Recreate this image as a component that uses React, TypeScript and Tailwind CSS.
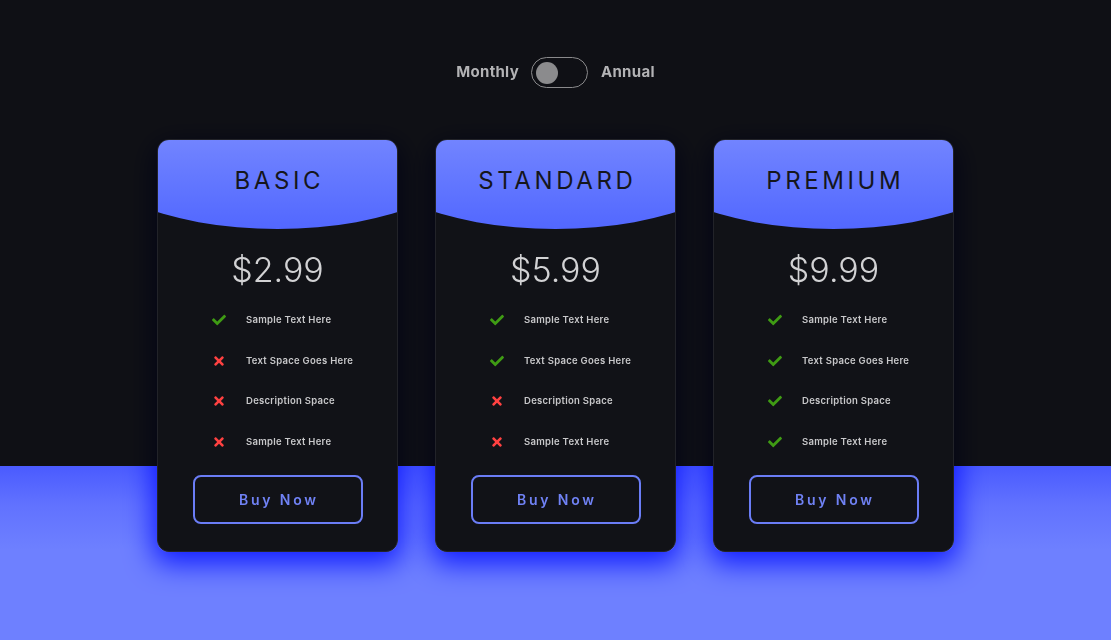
import { FaCheck, FaTimes } from "react-icons/fa";

const plans = [
    { name: "BASIC", price: "$2.99", checks: [true, false, false, false] },
    { name: "STANDARD", price: "$5.99", checks: [true, true, false, false] },
    { name: "PREMIUM", price: "$9.99", checks: [true, true, true, true] },
];

const features = ["Sample Text Here", "Text Space Goes Here", "Description Space", "Sample Text Here"];

function PlanCard({ name, price, checks }: { name: string; price: string; checks: boolean[] }) {
    return (
        <div className="relative w-[241px] h-[413px]">
            {/* shadow layer, multiplied so it darkens the black and saturates the blue */}
            <div className="absolute inset-0 rounded-[12px] mix-blend-multiply shadow-[0_8px_28px_4px_rgb(40,60,255)]" />
            <div className="relative h-full rounded-[12px] overflow-hidden bg-[#111217] border border-[#222329] flex flex-col">
                <div className="h-[90px] -mx-px -mt-px flex justify-center pt-[28px] bg-gradient-to-b from-[#7284ff] to-[#5267ff] [clip-path:ellipse(206px_90px_at_50%_0)]">
                    <h2 className="text-[24px] leading-[28px] tracking-[0.15em] font-normal text-[#15161c] pl-[0.15em]">{name}</h2>
                </div>
                <p className="mt-[21px] text-center text-[34px] leading-[40px] font-light text-[#d2d2d4]">{price}</p>
                <ul className="mt-[10px] pl-[53px] flex flex-col">
                    {features.map((f, i) => (
                        <li key={i} className="h-[40.5px] flex items-center">
                            <span className="w-[35px] flex">
                                {checks[i] ? (
                                    <FaCheck className="w-[16px] h-[14px] text-[#3f9b14]" />
                                ) : (
                                    <FaTimes className="w-[12px] h-[14px] ml-[2px] text-[#ff4141]" />
                                )}
                            </span>
                            <span className="text-[9.5px] font-semibold tracking-[0.03em] text-[#c8c8ca]">{f}</span>
                        </li>
                    ))}
                </ul>
                <button className="mt-[13px] mx-auto w-[170px] h-[49px] rounded-[8px] border-2 border-[#6b7df6] text-[#7082f5] text-[14px] font-semibold tracking-[0.2em] pl-[0.2em]">
                    Buy Now
                </button>
            </div>
        </div>
    );
}

export default function App() {
    return (
        <div
            className="h-[640px] w-full overflow-hidden flex flex-col items-center bg-[linear-gradient(to_bottom,#0f1015_0,#0f1015_466px,#4a5bff_466px,#6172ff_505px,#6e80ff_550px,#6e80ff_100%)]"
            style={{ fontFamily: "Inter, 'Noto Sans', sans-serif" }}
        >
            <div className="mt-[57px] flex items-center gap-[12px]">
                <span className="text-[15px] font-bold text-[#b3b3b5] tracking-[0.02em]">Monthly</span>
                <div className="w-[57px] h-[31px] rounded-full border border-[#8a8a8c] flex items-center px-[4px]">
                    <div className="w-[22px] h-[22px] rounded-full bg-[#8b8b8d]" />
                </div>
                <span className="text-[15px] font-bold text-[#b3b3b5] tracking-[0.02em] ml-[1px]">Annual</span>
            </div>

            <div className="mt-[51px] flex gap-[37px]">
                {plans.map((p) => (
                    <PlanCard key={p.name} {...p} />
                ))}
            </div>
        </div>
    );
}
